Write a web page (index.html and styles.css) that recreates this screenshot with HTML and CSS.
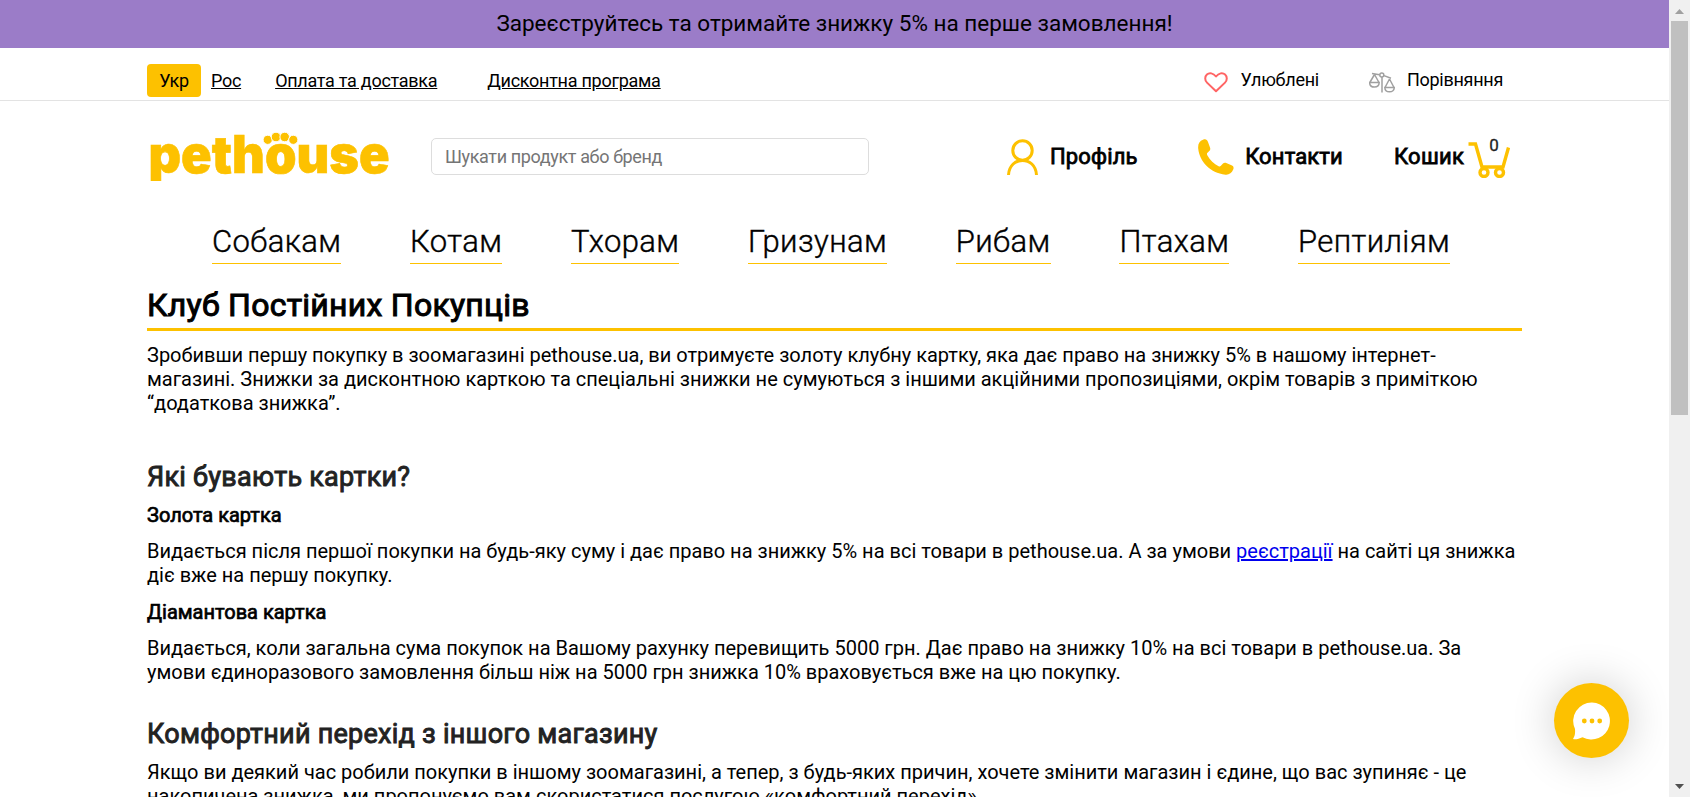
FILE: index.html
```html
<!DOCTYPE html>
<html lang="uk">
<head>
<meta charset="utf-8">
<title>Клуб Постійних Покупців</title>
<link rel="stylesheet" href="styles.css">
</head>
<body>
<div class="viewport">
  <div class="page">
    <div class="promo">Зареєструйтесь та отримайте знижку 5% на перше замовлення!</div>
    <div class="topbar">
      <div class="container topbar-row">
        <span class="lang-active">Укр</span>
        <a class="top-link lang-link">Рос</a>
        <a class="top-link pay-link">Оплата та доставка</a>
        <a class="top-link">Дисконтна програма</a>
        <div class="top-right">
          <svg class="heart" viewBox="0 0 24 21" width="24" height="21"><path d="M12 19.3 3 10.6C.6 8.200.7 4.500 2.900 2.500 5.400.3 9.200 1 12 4.500 14.800 1 18.600.3 21.100 2.500 23.300 4.500 23.400 8.200 21 10.600Z" fill="none" stroke="#ff6464" stroke-width="2" stroke-linejoin="round"/></svg>
          <span>Улюблені</span>
          <svg class="scales" viewBox="0 0 26 21" width="26" height="21" fill="none" stroke="#a0a0a0" stroke-width="1.500"><path d="M3 1.500 10.500 2.800M15 3.600 22 6.200M13 5V20.500M5.500 2.500.8 10.500M5.500 2.500 10 10.500M.6 10.500H10.200C10 16.500.8 16.500.6 10.500ZM20.500 7 16 15.500M20.500 7 25 15.500M15.800 15.500H25.300C25 21.300 16 21.300 15.800 15.500Z"/><circle cx="12.800" cy="3" r="2"/></svg>
          <span>Порівняння</span>
        </div>
      </div>
    </div>
    <header class="container header">
      <svg class="logo" viewBox="0 0 242 49" width="242" height="49">
        <text x="-.5" y="40.500" textLength="241" lengthAdjust="spacingAndGlyphs" class="logo-text">pethouse</text>
        <g fill="#fdc100" stroke="#fff" stroke-width="1"><circle cx="118.700" cy="7.800" r="4.600"/><circle cx="127" cy="5" r="4.800"/><circle cx="135.700" cy="5" r="4.800"/><circle cx="144.300" cy="7.800" r="4.600"/></g>
      </svg>
      <div class="search">Шукати продукт або бренд</div>
      <svg class="profile" viewBox="0 0 31 36" width="31" height="36" fill="none" stroke="#fdc100" stroke-width="3"><circle cx="15.500" cy="11.500" r="9.700"/><path d="M1.500 36C2.500 16.500 28.500 16.500 29.500 36"/></svg>
      <span class="head-link profile-text">Профіль</span>
      <svg class="phone" viewBox="0 0 36 36" width="36" height="36"><path fill="#fdc100" d="M5 .8C7.500-.3 9 .5 10 3L12 8.500C12.600 10.200 12.300 11.200 11 12.300L9.500 13.700C8.700 14.500 8.800 15.300 9.300 16.200 12 21 16 25 20.600 27.200 21.500 27.600 22.200 27.500 22.900 26.800L25 24.600C26 23.700 27 23.500 28.200 24L33.500 26.300C35.500 27.200 36 28.500 35.200 30.600 33.800 34.300 31 36 27.500 35.700 12 34 1.500 22.500.2 9.500-.2 5 1.500 2 5 .8Z"/></svg>
      <span class="head-link contacts-text">Контакти</span>
      <span class="head-link basket-text">Кошик</span>
      <div class="cart">
        <svg viewBox="0 0 42 36" width="42" height="36" fill="none" stroke="#fdc100" stroke-width="3.400"><path d="M.5 2H7.500L14 25H35L40.500 5.500"/><circle cx="16" cy="30.500" r="4"/><circle cx="31.500" cy="30.500" r="4"/></svg>
        <span class="cart-count">0</span>
      </div>
    </header>
    <nav class="nav">
      <a>Собакам</a><a>Котам</a><a>Тхорам</a><a>Гризунам</a><a>Рибам</a><a>Птахам</a><a>Рептиліям</a>
    </nav>
    <main class="container content">
      <h1>Клуб Постійних Покупців</h1>
      <p class="intro">Зробивши першу покупку в зоомагазині pethouse.ua, ви отримуєте золоту клубну картку, яка дає право на знижку 5% в нашому інтернет-<br>магазині. Знижки за дисконтною карткою та спеціальні знижки не сумуються з іншими акційними пропозиціями, окрім товарів з приміткою<br>“додаткова знижка”.</p>
      <h2>Які бувають картки?</h2>
      <h3>Золота картка</h3>
      <p>Видається після першої покупки на будь-яку суму і дає право на знижку 5% на всі товари в pethouse.ua. А за умови <a class="inline-link">реєстрації</a> на сайті ця знижка<br>діє вже на першу покупку.</p>
      <h3 class="second">Діамантова картка</h3>
      <p>Видається, коли загальна сума покупок на Вашому рахунку перевищить 5000 грн. Дає право на знижку 10% на всі товари в pethouse.ua. За<br>умови єдиноразового замовлення більш ніж на 5000 грн знижка 10% враховується вже на цю покупку.</p>
      <h2 class="transfer">Комфортний перехід з іншого магазину</h2>
      <p class="transfer-text">Якщо ви деякий час робили покупки в іншому зоомагазині, а тепер, з будь-яких причин, хочете змінити магазин і єдине, що вас зупиняє - це<br>накопичена знижка, ми пропонуємо вам скористатися послугою «комфортний перехід».</p>
    </main>
  </div>
  <div class="scrollbar">
    <svg width="9" height="5" viewBox="0 0 9 5"><path d="M0 5 4.500 0 9 5Z" fill="#a0a0a0"/></svg>
    <div class="thumb"></div>
    <svg width="9" height="5" viewBox="0 0 9 5"><path d="M0 0H9L4.500 5Z" fill="#505050"/></svg>
  </div>
  <div class="chat"><svg viewBox="0 0 38 38" width="38" height="38"><path fill="#fff" d="M19 .5A18.500 18.500 0 1 1 9.500 35.200C6.500 36.600 3.800 37.500.8 37.300 0 37.200-.1 36.700.5 36 2 34 2.300 30.500 2 27A18.500 18.500 0 0 1 19 .5Z"/><g fill="#fdc100"><circle cx="11.300" cy="19" r="2.400"/><circle cx="19" cy="19" r="2.400"/><circle cx="26.700" cy="19" r="2.400"/></g></svg></div>
</div>
</body>
</html>
```
FILE: styles.css
```css
body { margin: 0; overflow: hidden; font-family: Roboto, "Noto Sans", sans-serif; color: #000; }
.viewport { display: flex; width: 1690px; height: 797px; overflow: hidden; position: relative; background: #fff; }
.page { width: 1669px; height: 797px; overflow: hidden; }
.container { width: 1375px; margin: 0 auto; box-sizing: border-box; }
.promo { height: 48px; background: #9b7cc8; text-align: center; font-size: 22.500px; line-height: 46px; }
.topbar { height: 52px; border-bottom: 1px solid #e3e3e3; }
.topbar-row { display: flex; padding-top: 16px; font-size: 18px; letter-spacing: -.27px; line-height: 33px; }
.lang-active { width: 54px; height: 33px; border-radius: 4px; background: #fdc100; text-align: center; }
.top-link { text-decoration: underline; }
.lang-link { margin-left: 10px; }
.pay-link { margin: 0 50px 0 34px; }
.top-right { display: flex; margin-left: auto; margin-right: 19px; line-height: 31px; }
.heart { margin: 8px 13px 0 0; }
.scales { margin: 8px 12px 0 50px; }
.header { display: flex; height: 122px; padding-top: 31px; }
.logo { margin: 0 40px 0 2px; overflow: hidden; }
.logo-text { font-family: Inter, sans-serif; font-weight: 900; font-size: 52px; fill: #fdc100; stroke: #fdc100; stroke-width: .6px; }
.search { width: 438px; height: 37px; box-sizing: border-box; margin: 6px 138px 0 0; padding-left: 13px; border: 1px solid #ddd; border-radius: 5px; font-size: 18px; letter-spacing: -.37px; line-height: 35px; color: #757575; }
.head-link { font-size: 22px; letter-spacing: .15px; line-height: 49px; white-space: nowrap; -webkit-text-stroke: .8px #000; }
.profile { margin: 7px 12px 0 0; }
.profile-text { margin-right: 60.500px; }
.phone { margin: 7px 11px 0 0; }
.contacts-text { margin-right: 51px; }
.basket-text { letter-spacing: .3px; }
.cart { position: relative; margin: 10px 0 0 4px; }
.cart-count { position: absolute; left: 21px; top: -7px; font-size: 17px; line-height: 20px; color: #222; -webkit-text-stroke: .3px #222; }
.nav { display: flex; padding-left: 212px; gap: 68.700px; height: 60px; font-size: 31px; font-weight: 300; letter-spacing: .4px; line-height: 37px; -webkit-text-stroke: .4px #000; }
.nav a { height: 40px; border-bottom: 1px solid #fdc100; }
h1 { margin: 0; height: 45px; border-bottom: 3px solid #fdc100; font-size: 32px; line-height: 45px; font-weight: 400; letter-spacing: .25px; -webkit-text-stroke: 1px #000; }
p { margin: 0; font-size: 20px; line-height: 24px; white-space: nowrap; }
.intro { margin-top: 12px; }
h2 { margin: 45px 0 0; font-size: 27px; line-height: 34px; font-weight: 400; color: #222; letter-spacing: .25px; -webkit-text-stroke: .9px #222; }
h3 { margin: 9px 0 12px; font-size: 20px; line-height: 24px; font-weight: 400; -webkit-text-stroke: .7px #000; }
.second { margin-top: 13px; }
.transfer { margin-top: 33px; }
.transfer-text { margin-top: 9px; }
.inline-link { color: #00e; text-decoration: underline; }
.scrollbar { width: 21px; height: 797px; box-sizing: border-box; padding: 9px 0 8px; background: #f0f0f0; display: flex; flex-direction: column; align-items: center; }
.thumb { width: 17px; height: 394px; margin: 7px 0 auto; background: #c0c0c0; }
.chat { position: absolute; left: 1554px; top: 683px; width: 75px; height: 75px; border-radius: 50%; background: #fdc100; box-shadow: 0 0 45px rgba(0,0,0,.2); display: flex; align-items: center; justify-content: center; }
```
